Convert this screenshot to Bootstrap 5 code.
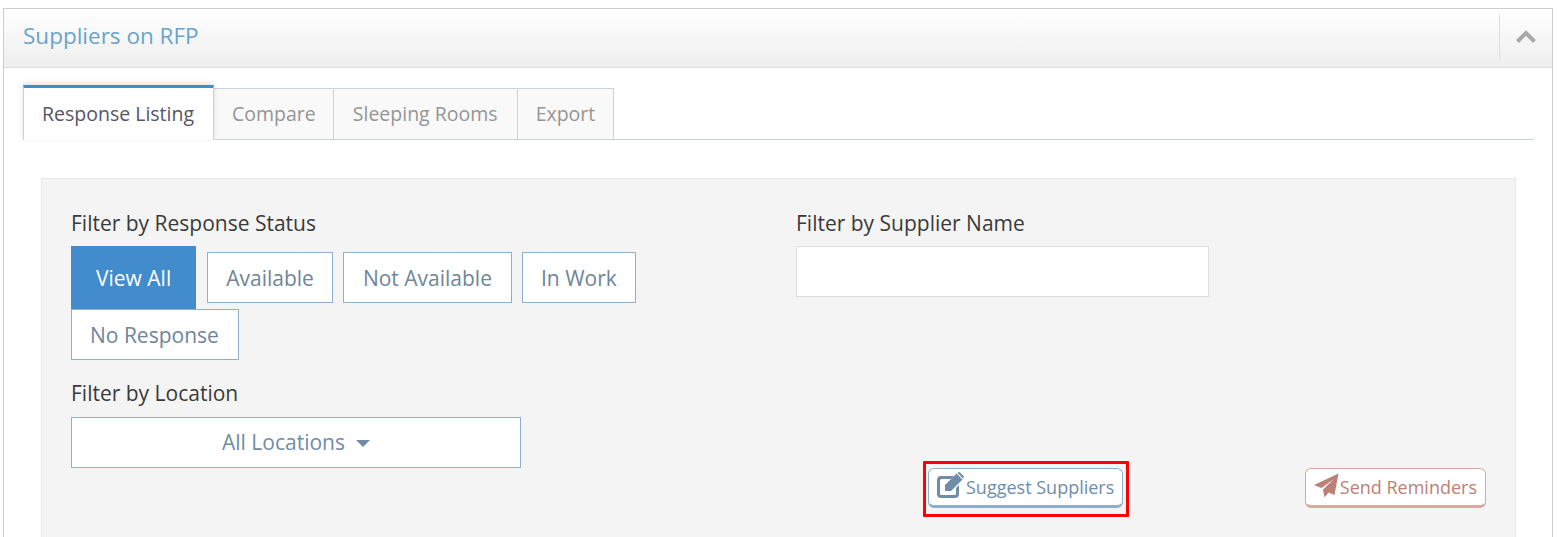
<!DOCTYPE html>
<html lang="en"><head><meta charset="utf-8"><title>Suppliers on RFP</title>
<link href="https://cdn.jsdelivr.net/npm/bootstrap@5.3.0/dist/css/bootstrap.min.css" rel="stylesheet">
<style>
html,body{height:537px;overflow:hidden;background:#fff}
body{font-family:"Open Sans",sans-serif;font-size:21px;color:#333;padding:8px 4px 0 3px}
.rfp-panel{border:1px solid #ccc;border-bottom:0;border-radius:0;height:529px;overflow:hidden}
.rfp-head{height:59px;background:linear-gradient(#fff,#eee);border-bottom:1px solid #ddd;padding:0 0 0 19px}
.rfp-title{font-size:22.500px;color:#6aa3cc;line-height:54px;margin:0;font-weight:400}
.rfp-toggle{width:53px;height:46px;border-left:1px solid #ddd;margin-top:5px}
.rfp-body{padding:17px 18px 0 19px}
.rfp-tabs{border-bottom:1px solid #c9d3dd;height:55px;flex-wrap:nowrap}
.rfp-tab{font-size:19.500px;line-height:50px;height:52px;margin-top:3px;padding:0 18px;color:#959595;background:#f9f9f9;border:1px solid #c9d3dd;border-left:0;white-space:nowrap}
.rfp-tab-on{margin-top:0;height:55px;line-height:52px;padding:0 19px 0 18px;background:#fff;color:#555565;border:1px solid #c9d3dd;border-top:3px solid #428bc4;border-bottom:0;box-shadow:0 -2px 5px rgba(0,0,0,.12);position:relative}
.rfp-tab-a{padding-right:17px}
.rfp-tab-b{padding:0 19px}
.rfp-well{margin:38px 0 0 18px;width:1475px;background:#f4f4f4;border:1px solid #e8e8e8;padding:30px 24px 0 29px;height:500px}
.rfp-label{font-size:21px;line-height:28px;margin:0 0 9px;color:#3a3a3a;font-weight:400}
.rfp-row{--bs-gutter-x:30px}
.rfp-filters{margin-bottom:3px}
.rfp-chip{font-size:21px;line-height:51px;height:51px;padding:0 19px;background:#fff;border:1px solid #8eb0d0;border-radius:0;color:#6f8599;margin:6px 10px 6px 0}
.rfp-chip:hover{background:#fff;color:#6f8599;border-color:#8eb0d0}
.rfp-chip-tight{padding:0 18px}
.rfp-chip-on,.rfp-chip-on:hover{height:63px;line-height:65px;margin:0 11px 0 0;padding:0 25px;background:#428bcc;border:0;color:#fff}
.rfp-chip-last{margin:0;height:51px;padding-left:18px}
.rfp-label-gap{margin-top:19px;margin-bottom:10px}
.rfp-select{display:flex;align-items:center;justify-content:center;width:450px;height:51px;background:#fff;border:1px solid #8eb0d0;color:#6f8ca8;font-size:21px;border-radius:0;padding:0}
.rfp-select:hover{background:#fff;color:#6f8ca8;border-color:#8eb0d0}
.rfp-caret{width:0;height:0;border-left:7px solid transparent;border-right:7px solid transparent;border-top:7px solid #6f8ca8;margin-left:11px;margin-top:1px}
.rfp-input{width:413px;height:51px;background:#fff;border:1px solid #ddd;border-radius:0}
.rfp-actions{padding:0 5px 0 132px}
.rfp-btn{display:inline-flex;align-items:center;height:40px;font-size:18px;line-height:1;background:#fff;border-radius:6px;padding:0 8px;border:1px solid;border-bottom-width:3px}
.rfp-suggest,.rfp-suggest:hover{color:#6f8da8;border-color:#8eafd0;background:#fff}
.rfp-remind,.rfp-remind:hover{color:#bd8077;border-color:#dca79f;background:#fff}
.rfp-suggest svg{width:27px;height:26px;margin-right:2px;margin-top:-4px}
.rfp-remind svg{width:25px;height:25px;margin-right:1px;margin-top:-4px}
.rfp-mark{position:relative}
.rfp-mark::after{content:"";position:absolute;left:-5px;top:-7px;width:206px;height:56px;border:3px solid #f00;border-radius:1px;pointer-events:none}
</style></head>
<body>
<div class="rfp-panel">
 <div class="rfp-head d-flex justify-content-between">
  <h2 class="rfp-title">Suppliers on RFP</h2>
  <div class="rfp-toggle d-flex align-items-center justify-content-center">
   <svg width="22" height="14" viewBox="0 0 22 14" aria-hidden="true"><path d="M2.500 11.500 11 3l8.500 8.500" fill="none" stroke="#a8a8a8" stroke-width="4"/></svg>
  </div>
 </div>
 <div class="rfp-body">
  <div class="rfp-tabs d-flex">
   <div class="rfp-tab rfp-tab-on">Response Listing</div>
   <div class="rfp-tab rfp-tab-a">Compare</div>
   <div class="rfp-tab rfp-tab-b">Sleeping Rooms</div>
   <div class="rfp-tab">Export</div>
  </div>
  <div class="rfp-well">
   <div class="row rfp-row">
    <div class="col-6">
     <p class="rfp-label">Filter by Response Status</p>
     <div class="d-flex flex-wrap rfp-filters">
      <button class="btn rfp-chip rfp-chip-on">View All</button>
      <button class="btn rfp-chip rfp-chip-tight">Available</button>
      <button class="btn rfp-chip">Not Available</button>
      <button class="btn rfp-chip rfp-chip-tight">In Work</button>
      <button class="btn rfp-chip rfp-chip-last">No Response</button>
     </div>
     <p class="rfp-label rfp-label-gap">Filter by Location</p>
     <button class="btn rfp-select">All Locations<span class="rfp-caret"></span></button>
    </div>
    <div class="col-6">
     <p class="rfp-label">Filter by Supplier Name</p>
     <input class="rfp-input d-block" type="text" aria-label="Filter by Supplier Name">
    </div>
   </div>
   <div class="row rfp-row">
    <div class="col-6 offset-6">
     <div class="d-flex justify-content-between rfp-actions">
      <div class="rfp-mark">
       <button class="btn rfp-btn rfp-suggest"><svg viewBox="0 0 27 26" aria-hidden="true"><path fill="#6f8da8" d="M4 4h13l-3 3H4.500A1.500 1.500 0 0 0 3 8.500v13A1.500 1.500 0 0 0 4.500 23h13a1.500 1.500 0 0 0 1.500-1.500V16l3-3v9a4 4 0 0 1-4 4H4a4 4 0 0 1-4-4V8a4 4 0 0 1 4-4z"/><path fill="#6f8da8" d="M8 13 19.500 1.500l6 6L14 19H8zM21 .5a1.500 1.500 0 0 1 2 0l3.500 3.500a1.500 1.500 0 0 1 0 2L26 6.500 20.500 1z"/></svg>Suggest Suppliers</button>
      </div>
      <button class="btn rfp-btn rfp-remind"><svg viewBox="0 0 25 25" aria-hidden="true"><path fill="#bd8077" d="M24.500.5 20.500 22l-6-2.500-4 5-1.500-8L20 6 7.500 15 0 12z"/></svg>Send Reminders</button>
     </div>
    </div>
   </div>
  </div>
 </div>
</div>
<script src="https://cdn.jsdelivr.net/npm/bootstrap@5.3.0/dist/js/bootstrap.bundle.min.js"></script>
</body></html>
